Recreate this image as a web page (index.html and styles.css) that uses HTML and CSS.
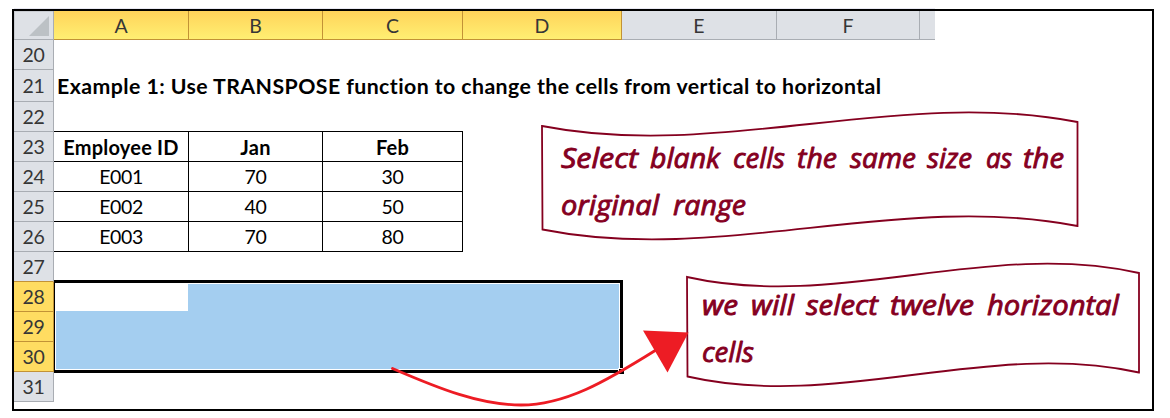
FILE: index.html
```html
<!DOCTYPE html>
<html lang="en">
<head>
<meta charset="utf-8">
<title>TRANSPOSE function</title>
<link rel="stylesheet" href="styles.css">
</head>
<body>
<main class="frame">
  <div class="sheet">
    <div class="corner"><svg width="20" height="20" viewBox="0 0 20 20"><path d="M20 0V20H0z" fill="#bcc1c5"/></svg></div>
    <div class="col on">A</div><div class="col on">B</div><div class="col on">C</div><div class="col on">D</div>
    <div class="col">E</div><div class="col">F</div><div class="col last"></div>

    <div class="row">20</div><div class="blank"></div>
    <div class="row">21</div><div class="title"><span>Example 1: Use TRANSPOSE function to change the cells from vertical to horizontal</span></div>
    <div class="row">22</div><div class="blank under"></div><div class="rest"></div>
    <div class="row">23</div><div class="cell head">Employee ID</div><div class="cell head">Jan</div><div class="cell head">Feb</div><div class="rest"></div>
    <div class="row">24</div><div class="cell">E001</div><div class="cell">70</div><div class="cell">30</div><div class="rest"></div>
    <div class="row">25</div><div class="cell">E002</div><div class="cell">40</div><div class="cell">50</div><div class="rest"></div>
    <div class="row">26</div><div class="cell">E003</div><div class="cell">70</div><div class="cell">80</div><div class="rest"></div>
    <div class="row before">27</div><div class="blank"></div>
    <div class="row on">28</div>
    <div class="selection"><div class="active"></div><div class="handle"></div></div>
    <div class="row on">29</div>
    <div class="row on">30</div>
    <div class="row">31</div><div class="blank"></div>
  </div>
</main>
<svg class="notes" width="1170" height="418" viewBox="0 0 1170 418">
  <path d="M14 8.5H935" stroke="#e9e9f3" fill="none"/>
  <g class="wave">
    <path d="M542 126C720 161 899 87 1077.5 122V226C899 191 720 265 542.5 229.5z"/>
    <path d="M687 277C838 311 988 239 1139 273V372.500C988 339 838 411 687.500 376.500z"/>
  </g>
  <g class="ink">
    <text y="168"><tspan x="561" textLength="77" lengthAdjust="spacingAndGlyphs">Select</tspan> <tspan x="650" textLength="70" lengthAdjust="spacingAndGlyphs">blank</tspan> <tspan x="733" textLength="52" lengthAdjust="spacingAndGlyphs">cells</tspan> <tspan x="797" textLength="40" lengthAdjust="spacingAndGlyphs">the</tspan> <tspan x="850" textLength="66" lengthAdjust="spacingAndGlyphs">same</tspan> <tspan x="927" textLength="45" lengthAdjust="spacingAndGlyphs">size</tspan> <tspan x="986" textLength="26" lengthAdjust="spacingAndGlyphs">as</tspan> <tspan x="1023" textLength="41" lengthAdjust="spacingAndGlyphs">the</tspan></text>
    <text y="215"><tspan x="561" textLength="98" lengthAdjust="spacingAndGlyphs">original</tspan> <tspan x="673" textLength="73" lengthAdjust="spacingAndGlyphs">range</tspan></text>
    <text y="315"><tspan x="702" textLength="36" lengthAdjust="spacingAndGlyphs">we</tspan> <tspan x="751" textLength="43" lengthAdjust="spacingAndGlyphs">will</tspan> <tspan x="806" textLength="72" lengthAdjust="spacingAndGlyphs">select</tspan> <tspan x="890" textLength="84" lengthAdjust="spacingAndGlyphs">twelve</tspan> <tspan x="987" textLength="132" lengthAdjust="spacingAndGlyphs">horizontal</tspan></text>
    <text y="362"><tspan x="702" textLength="52" lengthAdjust="spacingAndGlyphs">cells</tspan></text>
  </g>
  <path d="M392.500 368.500C440 389 480 405 521 405C565 405 605 382 656 350" fill="none" stroke="#ed1c24" stroke-width="2.8" stroke-linecap="round"/>
  <path d="M643 330.500L688.500 332.500L667.500 372.500z" fill="#ed1c24"/>
</svg>
</body>
</html>
```
FILE: styles.css
```css
* { box-sizing: border-box; }
body {
  margin: 0;
  width: 1170px;
  height: 418px;
  padding: 9px 0 0 12px;
  background: #fff;
  overflow: hidden;
  font-family: Lato, "Open Sans", sans-serif;
}
.frame {
  width: 1142px;
  height: 402px;
  border: 2px solid #000;
}
.sheet {
  display: grid;
  width: 921px;
  grid-template-columns: 40px 135px 134px 140px 159px 155px 143px 15px;
  grid-template-rows: 29px 30px 32px repeat(10, 30px);
  font-size: 19.5px;
  line-height: 28px;
  color: #000;
}
.corner {
  display: flex;
  justify-content: flex-end;
  padding: 5px 4px 0 0;
  background: #dee1e6;
  border-right: 1px solid #a9adb3;
  border-bottom: 1px solid #a9adb3;
  box-shadow: inset 1px 1px #c9ccd1;
}
.col, .row {
  display: flex;
  align-items: center;
  justify-content: center;
  color: #363636;
  background: #dee1e6;
  border-right: 1px solid #a9adb3;
  border-bottom: 1px solid #a9adb3;
}
.col { padding-top: 2px; }
.col.on {
  background: linear-gradient(#ffd35a, #ffef72);
  border-color: #c29236;
}
.col.last { border-right: 0; }
.row { grid-column: 1; padding-top: 1px; letter-spacing: -0.4px; }
.row.before { border-bottom-color: #c29236; }
.row.on { background: #ffdc61; border-color: #c29236; }
.blank, .title { grid-column: 2 / -1; }
.blank.under { grid-column: 2 / 5; border-bottom: 1px solid #000; }
.rest { grid-column: 5 / -1; }
.title {
  display: flex;
  align-items: center;
  padding: 0 0 0 3px;
  font-size: 21.3px;
  font-weight: 700;
  white-space: nowrap;
}
.title span { letter-spacing: 0.43px; }
.cell {
  display: flex;
  align-items: center;
  justify-content: center;
  padding-top: 1px;
  letter-spacing: -0.4px;
  border-right: 1px solid #000;
  border-bottom: 1px solid #000;
}
.head { font-size: 20px; font-weight: 700; letter-spacing: 0.2px; }
.selection {
  grid-column: 2 / 6;
  grid-row: 10 / 13;
  position: relative;
  margin: -2px -1px -1px 0;
  border: 3px solid #000;
  border-left-width: 1px;
  background: #a4cef0;
  box-shadow: inset 0 0 0 1px #fff;
}
.active { width: 133px; height: 28px; background: #fff; }
.handle {
  position: absolute;
  right: -4px;
  bottom: -4px;
  width: 6px;
  height: 6px;
  background: #000;
  border-left: 1px solid #fff;
  border-top: 1px solid #fff;
}
.notes { position: absolute; left: 0; top: 0; }
.wave path { fill: none; stroke: #85001f; stroke-width: 1.8; }
.ink text {
  font-family: "Open Sans", "Noto Sans", sans-serif;
  font-size: 28px;
  font-style: italic;
  font-weight: 500;
  fill: #85001f;
  stroke: #85001f;
  stroke-width: 0.9px;
  stroke-linejoin: round;
}
```
